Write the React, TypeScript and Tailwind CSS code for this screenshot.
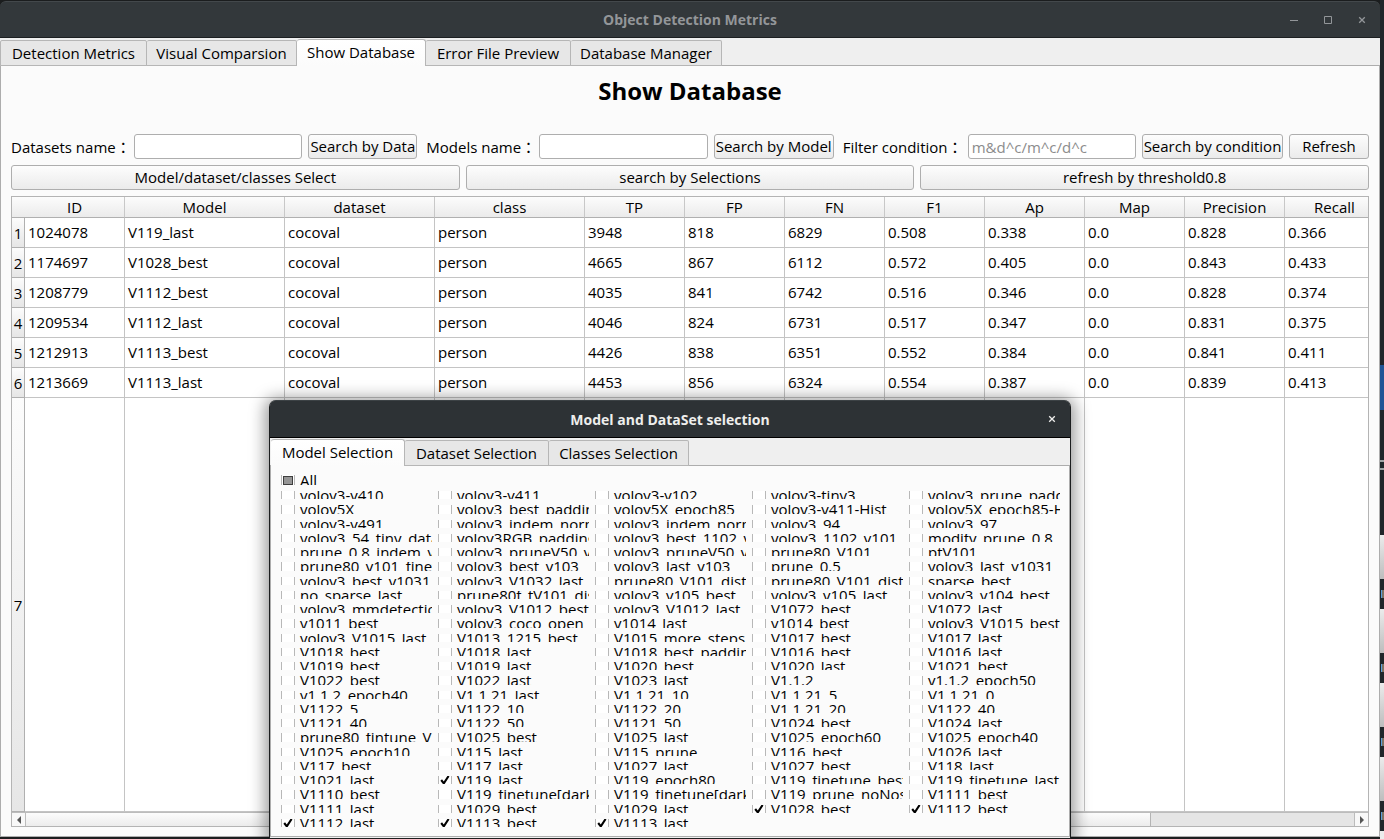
import type { ReactNode } from 'react';
import clsx from 'clsx';

const COLUMNS = [
  { name: 'ID', width: 'w-[100px]' },
  { name: 'Model', width: 'w-[160px]' },
  { name: 'dataset', width: 'w-[150px]' },
  { name: 'class', width: 'w-[150px]' },
  { name: 'TP', width: 'w-[100px]' },
  { name: 'FP', width: 'w-[100px]' },
  { name: 'FN', width: 'w-[100px]' },
  { name: 'F1', width: 'w-[100px]' },
  { name: 'Ap', width: 'w-[100px]' },
  { name: 'Map', width: 'w-[100px]' },
  { name: 'Precision', width: 'w-[100px]' },
  { name: 'Recall', width: 'w-[100px]' },
];

const ROWS = [
  ['1024078', 'V119_last', 'cocoval', 'person', '3948', '818', '6829', '0.508', '0.338', '0.0', '0.828', '0.366'],
  ['1174697', 'V1028_best', 'cocoval', 'person', '4665', '867', '6112', '0.572', '0.405', '0.0', '0.843', '0.433'],
  ['1208779', 'V1112_best', 'cocoval', 'person', '4035', '841', '6742', '0.516', '0.346', '0.0', '0.828', '0.374'],
  ['1209534', 'V1112_last', 'cocoval', 'person', '4046', '824', '6731', '0.517', '0.347', '0.0', '0.831', '0.375'],
  ['1212913', 'V1113_best', 'cocoval', 'person', '4426', '838', '6351', '0.552', '0.384', '0.0', '0.841', '0.411'],
  ['1213669', 'V1113_last', 'cocoval', 'person', '4453', '856', '6324', '0.554', '0.387', '0.0', '0.839', '0.413'],
];

const MODELS = [
  'yolov3-v410', 'yolov3-v411', 'yolov3-v102', 'yolov3-tiny3', 'yolov3_prune_padding',
  'yolov5X', 'yolov3_best_padding', 'yolov5X_epoch85', 'yolov3-v411-Hist', 'yolov5X_epoch85-Hist',
  'yolov3-v491', 'yolov3_indem_norm', 'yolov3_indem_norm', 'yolov3_94', 'yolov3_97',
  'yolov3_54_tiny_data', 'yolov3RGB_padding', 'yolov3_best_1102_v', 'yolov3_1102_v101', 'modify_prune_0.8',
  'prune_0.8_indem_v1', 'yolov3_pruneV50_v1', 'yolov3_pruneV50_v2', 'prune80_V101', 'ptV101',
  'prune80_v101_finetune', 'yolov3_best_v103', 'yolov3_last_v103', 'prune_0.5', 'yolov3_last_v1031',
  'yolov3_best_v1031', 'yolov3_V1032_last', 'prune80_V101_dist', 'prune80_V101_dist', 'sparse_best',
  'no_sparse_last', 'prune80f_tV101_dist', 'yolov3_v105_best', 'yolov3_v105_last', 'yolov3_v104_best',
  'yolov3_mmdetection', 'yolov3_V1012_best', 'yolov3_V1012_last', 'V1072_best', 'V1072_last',
  'v1011_best', 'yolov3_coco_open', 'v1014_last', 'v1014_best', 'yolov3_V1015_best',
  'yolov3_V1015_last', 'V1013_1215_best', 'V1015_more_steps', 'V1017_best', 'V1017_last',
  'V1018_best', 'V1018_last', 'V1018_best_padding', 'V1016_best', 'V1016_last',
  'V1019_best', 'V1019_last', 'V1020_best', 'V1020_last', 'V1021_best',
  'V1022_best', 'V1022_last', 'V1023_last', 'V1.1.2', 'v1.1.2_epoch50',
  'v1.1.2_epoch40', 'V1.1.21_last', 'V1.1.21_10', 'V1.1.21_5', 'V1.1.21_0',
  'V1122_5', 'V1122_10', 'V1122_20', 'V1.1.21_20', 'V1122_40',
  'V1121_40', 'V1122_50', 'V1121_50', 'V1024_best', 'V1024_last',
  'prune80_fintune_V1', 'V1025_best', 'V1025_last', 'V1025_epoch60', 'V1025_epoch40',
  'V1025_epoch10', 'V115_last', 'V115_prune', 'V116_best', 'V1026_last',
  'V117_best', 'V117_last', 'V1027_last', 'V1027_best', 'V118_last',
  'V1021_last', 'V119_last', 'V119_epoch80', 'V119_finetune_best', 'V119_finetune_last',
  'V1110_best', 'V119_finetune[dark]', 'V119_finetune[dark]', 'V119_prune_noNose', 'V1111_best',
  'V1111_last', 'V1029_best', 'V1029_last', 'V1028_best', 'V1112_best',
  'V1112_last', 'V1113_best', 'V1113_last',
];

const CHECKED = new Set(['V119_last', 'V1028_best', 'V1112_best', 'V1112_last', 'V1113_best', 'V1113_last']);

function PushButton({ children, className }: { children: ReactNode; className: string }) {
  return (
    <button
      type="button"
      className={clsx(
        'h-[25px] rounded-[3px] border border-[#aeaeae] bg-linear-to-b from-[#fdfdfd] to-[#ebebeb] pb-[2px] text-center leading-5 whitespace-nowrap',
        className,
      )}
    >
      {children}
    </button>
  );
}

function SearchField({ id, label, labelClass, placeholder }: { id: string; label: string; labelClass: string; placeholder?: string }) {
  return (
    <>
      <label htmlFor={id} className={clsx('shrink-0 whitespace-nowrap', labelClass)}>
        {label}
      </label>
      <input
        id={id}
        type="text"
        placeholder={placeholder}
        className="h-[25px] w-0 min-w-0 flex-1 rounded-[3px] border border-[#aeaeae] bg-white px-[3px] placeholder:text-[#8c8c8c]"
      />
    </>
  );
}

function Tab({ children, active, first, className }: { children: ReactNode; active?: boolean; first?: boolean; className: string }) {
  return (
    <button
      type="button"
      role="tab"
      aria-selected={!!active}
      className={clsx(
        'box-border border-t border-r border-[#b6b6b6] text-center whitespace-nowrap',
        active
          ? 'h-[27px] rounded-t-[3px] bg-linear-to-b from-white to-[#fbfbfb] pb-[2px]'
          : 'h-[26px] rounded-t-[2px] border-b bg-[#e7e7e7]',
        first && 'border-l',
        className,
      )}
    >
      {children}
    </button>
  );
}

function ModelBox({ name, checked }: { name: string; checked?: boolean }) {
  return (
    <label className="flex min-w-0 items-center gap-[5px] overflow-hidden whitespace-nowrap">
      <span className="relative size-[14px] shrink-0">
        <input
          type="checkbox"
          defaultChecked={checked}
          className="peer block size-[14px] appearance-none rounded-[2px] border border-[#b8b8b8] bg-white"
        />
        <svg viewBox="0 0 14 14" className="pointer-events-none absolute inset-0 hidden size-[14px] peer-checked:block">
          <path d="M3.2 7 L5.8 10.4 L10.6 3" fill="none" stroke="#000" strokeWidth="2.1" />
        </svg>
      </span>
      <span>{name}</span>
    </label>
  );
}

function CloseIcon() {
  return (
    <svg viewBox="0 0 12 12" className="size-3" fill="none" stroke="currentColor" strokeWidth="1.3">
      <path d="M3.2 3.2 L8.8 8.8 M8.8 3.2 L3.2 8.8" />
    </svg>
  );
}

function DesktopEdge() {
  return (
    <div className="flex w-1 shrink-0 flex-col overflow-hidden bg-[#20262a]">
      <div className="mt-[365px] h-[45px] shrink-0 bg-[#1f5596]" />
      <div className="mt-[50px] h-[2px] shrink-0 bg-[#a0a3a5]" />
      <div className="mt-[6px] mb-[65px] h-[2px] shrink-0 bg-[#a0a3a5]" />
      {[0, 1, 2, 3].map((n) => (
        <div key={n} className="h-[74px] shrink-0">
          <div className="h-[44px] bg-linear-to-b from-[#ececec] to-[#bdbdbd]" />
          <div className="mt-[11px] ml-px h-2 border-l border-[#5aa0dc] bg-[#7d7466]" />
        </div>
      ))}
      <div className="flex-1 bg-[#ececec]" />
    </div>
  );
}

function SelectionDialog() {
  return (
    <section
      role="dialog"
      aria-label="Model and DataSet selection"
      className="absolute top-[400px] bottom-0 left-[269px] flex w-[802px] flex-col rounded-t-[7px] border-x border-b border-[#1b1d1e] bg-[#efefef] shadow-[0_2px_16px_4px_rgba(0,0,0,0.4)]"
    >
      <header className="flex h-[38px] shrink-0 items-center rounded-t-[6px] border-t border-b border-t-[#3c4245] border-b-black bg-[#2d3235] text-[#eeeeec]">
        <span className="w-9" />
        <h2 className="flex-1 pt-px text-center text-sm font-bold">Model and DataSet selection</h2>
        <button type="button" aria-label="Close dialog" className="flex w-9 justify-center">
          <CloseIcon />
        </button>
      </header>
      <div role="tablist" className="flex h-7 shrink-0 items-end border-b border-[#adadad] pl-px">
        <Tab active className="-mb-px w-[134px]">Model Selection</Tab>
        <Tab className="-mb-px w-[144px]">Dataset Selection</Tab>
        <Tab className="-mb-px w-[140px]">Classes Selection</Tab>
      </div>
      <div className="mb-px flex min-h-0 flex-1 border-x border-b border-[#adadad] bg-[#fbfbfb] pt-[9px] pr-[9px] pb-[9px] pl-[10px]">
        <div className="grid min-w-0 flex-1 grid-cols-5 grid-rows-[10px_repeat(24,minmax(0,1fr))] gap-[6px]">
          <label className="col-span-5 flex min-w-0 items-center gap-[5px] overflow-hidden">
            <span className="relative size-[14px] shrink-0">
              <input
                type="checkbox"
                className="block size-[14px] appearance-none rounded-[2px] border border-[#b8b8b8] bg-white"
              />
              <svg viewBox="0 0 14 14" className="pointer-events-none absolute inset-0 size-[14px]">
                <rect x="2.5" y="3.5" width="9" height="8" fill="#959595" stroke="#3e3e3e" />
              </svg>
            </span>
            <span>All</span>
          </label>
          {MODELS.map((name, i) => (
            <ModelBox key={i} name={name} checked={CHECKED.has(name)} />
          ))}
        </div>
      </div>
    </section>
  );
}

function ResultTable() {
  const head = 'h-[21px] border-r border-b border-r-[#c8c8c8] border-b-[#b0b0b0] bg-linear-to-b from-[#fcfcfc] to-[#ebebeb] p-0 text-center leading-5 font-normal';
  const side = 'border-r border-b border-[#b0b0b0] bg-linear-to-b from-[#fcfcfc] to-[#e6e6e6] p-0 pt-px text-center font-normal';
  const cell = 'border-r border-b border-[#c4c4c4] bg-white p-0 pb-px pl-[3px]';
  return (
    <div className="mt-[6px] overflow-hidden border border-[#b4b4b4] bg-white">
      <table className="w-[1373px] table-fixed border-separate border-spacing-0">
        <thead>
          <tr>
            <th className={clsx(head, 'w-[13px] border-r-0')} aria-label="Row" />
            {COLUMNS.map((c) => (
              <th key={c.name} scope="col" className={clsx(head, c.width)}>
                {c.name}
              </th>
            ))}
          </tr>
        </thead>
        <tbody>
          {ROWS.map((row, r) => (
            <tr key={row[0]} className="h-[30px]">
              <th scope="row" className={side}>{r + 1}</th>
              {row.map((value, i) => (
                <td key={i} className={cell}>{value}</td>
              ))}
            </tr>
          ))}
          <tr className="h-[414px]">
            <th scope="row" className={side}>7</th>
            {COLUMNS.map((c) => (
              <td key={c.name} className={cell} />
            ))}
          </tr>
        </tbody>
      </table>
      <div className="flex h-[14px] border-t border-[#bcbcbc] bg-[#e5e5e5]">
        <button type="button" aria-label="Scroll left" className="flex w-[14px] items-center justify-center border-r border-[#bcbcbc] bg-[#f8f8f8]">
          <svg viewBox="0 0 4 8" className="h-2 w-1" fill="#555"><path d="M4 0 V8 L0 4 Z" /></svg>
        </button>
        <div className="w-[83%] border-r border-[#b4b4b4] bg-linear-to-b from-[#fcfcfc] to-[#ececec]" />
        <div className="flex-1" />
        <button type="button" aria-label="Scroll right" className="flex w-[14px] items-center justify-center border-l border-[#bcbcbc] bg-[#f8f8f8]">
          <svg viewBox="0 0 4 8" className="h-2 w-1" fill="#555"><path d="M0 0 V8 L4 4 Z" /></svg>
        </button>
      </div>
    </div>
  );
}

export default function App() {
  return (
    <div className='relative flex min-h-screen overflow-hidden bg-[#1b1d1e] font-["Open_Sans","Noto_Sans_CJK_JP",sans-serif] text-[15px] leading-5 text-black'>
      <main className="mt-px mb-px flex min-w-0 flex-1 flex-col">
        <header className="flex h-[37px] shrink-0 items-center rounded-t-[6px] border-t border-b border-t-[#43484b] border-b-[#1c1f21] bg-[#33383b] pr-px text-[#939699]">
          <span className="w-[103px]" />
          <h1 className="flex-1 text-center text-sm font-bold">Object Detection Metrics</h1>
          <button type="button" aria-label="Minimize" className="flex w-[34px] justify-center">
            <svg viewBox="0 0 12 12" className="size-3" stroke="currentColor"><path d="M2 6.5 H10" /></svg>
          </button>
          <button type="button" aria-label="Maximize" className="flex w-[34px] justify-center">
            <svg viewBox="0 0 12 12" className="size-3" fill="none" stroke="currentColor"><path d="M2.5 2.5 H9.5 V9.5 H2.5 Z" /></svg>
          </button>
          <button type="button" aria-label="Close" className="flex w-[34px] justify-center">
            <CloseIcon />
          </button>
        </header>
        <div role="tablist" className="flex h-7 shrink-0 items-end border-b border-[#adadad] bg-[#efefef]">
          <Tab first className="-mb-px w-[147px]">Detection Metrics</Tab>
          <Tab className="-mb-px w-[150px]">Visual Comparsion</Tab>
          <Tab active className="-mb-px w-[129px]">Show Database</Tab>
          <Tab className="-mb-px w-[145px]">Error File Preview</Tab>
          <Tab className="-mb-px w-[151px]">Database Manager</Tab>
        </div>
        <div className="mb-px flex-1 border-x border-b border-[#adadad] bg-[#fbfbfb] px-[10px] pb-[9px]">
          <h2 className="h-[68px] pt-[9px] text-center text-2xl leading-8 font-bold">Show Database</h2>
          <div className="flex items-center gap-[6px]">
            <SearchField id="dataset-name" label="Datasets name：" labelClass="w-[117px]" />
            <PushButton className="w-[109px]">Search by Data</PushButton>
            <SearchField id="model-name" label="Models name：" labelClass="w-[110px] pl-[3px]" />
            <PushButton className="w-[120px]">Search by Model</PushButton>
            <SearchField id="condition" label="Filter condition：" labelClass="w-[122px] pl-[3px]" placeholder="m&d^c/m^c/d^c" />
            <PushButton className="w-[141px]">Search by condition</PushButton>
            <PushButton className="w-[80px]">Refresh</PushButton>
          </div>
          <div className="mt-[6px] flex gap-[6px]">
            <PushButton className="flex-1">Model/dataset/classes Select</PushButton>
            <PushButton className="flex-1">search by Selections</PushButton>
            <PushButton className="flex-1">refresh by threshold0.8</PushButton>
          </div>
          <ResultTable />
        </div>
      </main>
      <DesktopEdge />
      <SelectionDialog />
    </div>
  );
}
